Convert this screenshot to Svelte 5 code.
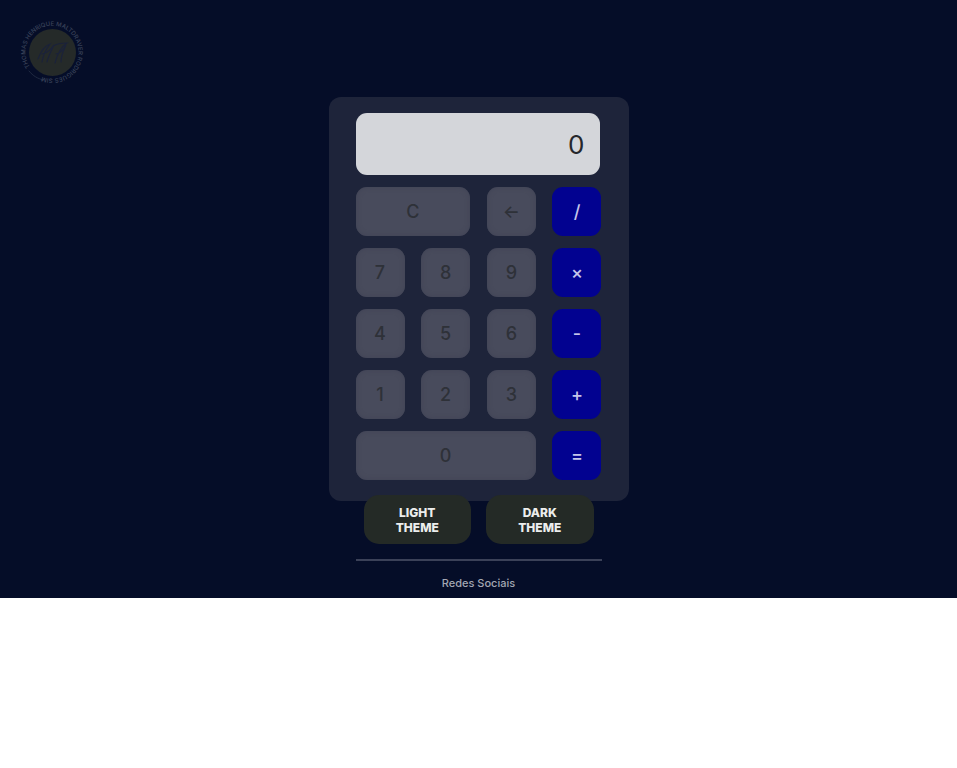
<script>
  let display = $state('0');
  let light = $state(false);

  const keys = [
    { label: 'C', kind: 'c', span: 'wide' },
    { label: '←', kind: 'back', name: 'Backspace' },
    { label: '/', kind: 'op' },
    { label: '7' },
    { label: '8' },
    { label: '9' },
    { label: '×', kind: 'op' },
    { label: '4' },
    { label: '5' },
    { label: '6' },
    { label: '-', kind: 'op' },
    { label: '1' },
    { label: '2' },
    { label: '3' },
    { label: '+', kind: 'op' },
    { label: '0', span: 'zero' },
    { label: '=', kind: 'op' }
  ];

  let stored = null;
  let pending = '';
  let fresh = true;

  function compute(a, b, op) {
    if (op === '+') return a + b;
    if (op === '-') return a - b;
    if (op === '×') return a * b;
    if (op === '/') return a / b;
    return b;
  }

  function press(key) {
    if (key.kind === 'c') {
      display = '0';
      stored = null;
      pending = '';
      fresh = true;
    } else if (key.kind === 'back') {
      display = display.length > 1 ? display.slice(0, -1) : '0';
    } else if (key.kind === 'op') {
      const value = Number(display);
      stored = stored === null ? value : compute(stored, value, pending);
      display = String(stored);
      pending = key.label;
      if (key.label === '=') stored = null;
      fresh = true;
    } else {
      display = fresh || display === '0' ? key.label : display + key.label;
      fresh = false;
    }
  }
</script>

<div class="page" class:light>
  <a class="logo" href="#top" aria-label="Thomas Henrique">
    <svg viewBox="0 0 66 66" width="66" height="66">
      <defs>
        <path id="ring" d="M10 47A26.5 26.5 0 1 1 54 47A26.5 26.5 0 0 1 10 47" />
      </defs>
      <circle cx="32.500" cy="32.500" r="23.500" fill="#252a29" />
      <g fill="none" stroke="#1b223a" stroke-width="1.200" stroke-linecap="round">
        <path d="M18 39c3-8 6-13 12-15-4 5-7 12-8 18M22 34c6-1 9-5 12-9-3 6-6 12-7 17M33 26c5-3 10-3 14-3-6 4-10 12-12 20M36 34c5-1 8-5 10-9-3 6-5 11-5 17" />
        <path d="M9 51c4 5 9 8 15 9" stroke="#202a42" stroke-width="1" />
      </g>
      <text><textPath href="#ring">THOMAS HENRIQUE MALTDRAVER RODRIGUES SIM</textPath></text>
    </svg>
  </a>

  <main>
    <section class="calculator" aria-label="Calculator">
      <output class="display">{display}</output>
      <div class="keys">
        {#each keys as key}
          <button class="key {key.kind ?? ''} {key.span ?? ''}" aria-label={key.name} onclick={() => press(key)}>{key.label}</button>
        {/each}
      </div>
    </section>

    <div class="themes">
      <button onclick={() => (light = true)}>LIGHT<br />THEME</button>
      <button onclick={() => (light = false)}>DARK<br />THEME</button>
    </div>

    <footer>Redes Sociais</footer>
  </main>
</div>

<style>
  :global(body) {
    background: #fff;
  }
  .page {
    position: relative;
    box-sizing: border-box;
    padding: 97px 0 6px;
    background: #050d28;
    font-family: Inter, 'Liberation Sans', sans-serif;
  }
  .page.light {
    background: #dfe3ee;
  }
  .logo {
    position: absolute;
    top: 20px;
    left: 20px;
  }
  .logo svg {
    display: block;
    overflow: visible;
  }
  .logo text {
    fill: #3a435a;
    font-size: 6px;
    font-weight: 500;
  }
  main {
    width: 300px;
    margin: 0 auto;
  }
  .calculator {
    box-sizing: border-box;
    padding: 16px 27px 21px;
    border-radius: 12px;
    background: #1e243a;
  }
  .display {
    display: flex;
    align-items: center;
    justify-content: flex-end;
    box-sizing: border-box;
    height: 62px;
    margin: 0 2px 12px 0;
    padding: 0 15px;
    border-radius: 11px;
    background: #d4d6da;
    color: #25272b;
    font-size: 26px;
    overflow: hidden;
  }
  .keys {
    display: grid;
    grid-template-columns: repeat(4, 49px);
    justify-content: space-between;
    row-gap: 12px;
  }
  button {
    border: 0;
    padding: 0;
    font-family: inherit;
    cursor: pointer;
  }
  .key {
    height: 49px;
    border-radius: 11px;
    background: #484b5c;
    box-shadow: inset 0 0 5px #404355;
    color: #2e3138;
    font-size: 18px;
    font-weight: 500;
  }
  .wide {
    grid-column: span 2;
  }
  .zero {
    grid-column: span 3;
  }
  .op {
    background: #020290;
    box-shadow: none;
    color: #c5c5ea;
  }
  .themes {
    position: relative;
    display: flex;
    gap: 15px;
    margin: -6px 35px 15px;
  }
  .themes button {
    flex: 1;
    height: 49px;
    border-radius: 15px;
    background: #242a26;
    color: #eceeed;
    font-size: 12px;
    font-weight: 800;
    line-height: 15px;
  }
  footer {
    margin: 0 27px;
    padding-top: 14px;
    border-top: 2px solid #3b4158;
    color: #a3a7b3;
    font-size: 11px;
    font-weight: 500;
    line-height: 17px;
    text-align: center;
  }
</style>
